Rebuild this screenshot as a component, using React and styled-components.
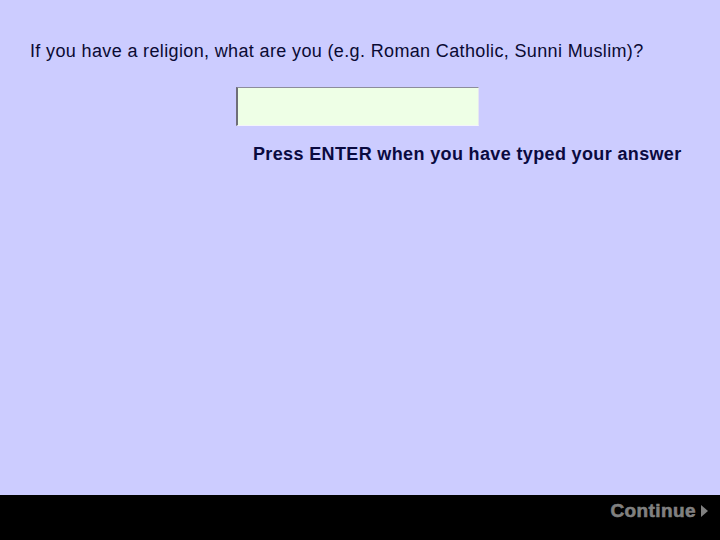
import styled, { createGlobalStyle } from "styled-components";

const GlobalStyle = createGlobalStyle`
  html, body {
    margin: 0;
    padding: 0;
    background: #ccccff;
  }
  body {
    font-family: "Liberation Sans", Arial, sans-serif;
  }
`;

const Page = styled.div`
  width: 720px;
  height: 540px;
  display: flex;
  flex-direction: column;
  background: #ccccff;
  overflow: hidden;
`;

const Main = styled.div`
  flex: 1;
  display: flex;
  flex-direction: column;
  padding: 41px 0 0 30px;
`;

const Question = styled.div`
  font-size: 18px;
  line-height: 20px;
  letter-spacing: 0.36px;
  color: #0a0a33;
`;

const Answer = styled.input`
  box-sizing: border-box;
  width: 243px;
  height: 39px;
  margin: 26px 0 0 206px;
  padding: 0 4px;
  background: #eeffe6;
  border-style: solid;
  border-width: 1px 1px 1px 2px;
  border-color: #8c8c9c #e6e6f0 #f4f4fa #6e6e78;
  font-family: "Liberation Sans", Arial, sans-serif;
  font-size: 16px;
  outline: none;
`;

const Hint = styled.div`
  margin: 17px 0 0 223px;
  font-size: 18px;
  line-height: 22px;
  font-weight: 700;
  letter-spacing: 0.36px;
  color: #0a0a40;
`;

const Footer = styled.div`
  height: 45px;
  box-sizing: border-box;
  background: #000;
  display: flex;
  align-items: flex-start;
  justify-content: flex-end;
  padding: 5px 12px 0 0;
`;

const ContinueButton = styled.div`
  display: flex;
  align-items: center;
  gap: 5px;
  color: #808080;
  font-size: 19px;
  line-height: 22px;
  font-weight: 700;
  letter-spacing: 0.4px;
  -webkit-text-stroke: 0.6px #808080;
  cursor: pointer;
`;

const Arrow = styled.span`
  width: 0;
  height: 0;
  border-top: 6px solid transparent;
  border-bottom: 6px solid transparent;
  border-left: 7px solid #808080;
`;

export default function App() {
  return (
    <Page>
      <GlobalStyle />
      <Main>
        <Question>
          If you have a religion, what are you (e.g. Roman Catholic, Sunni Muslim)?
        </Question>
        <div>
          <Answer type="text" />
        </div>
        <Hint>Press ENTER when you have typed your answer</Hint>
      </Main>
      <Footer>
        <ContinueButton>
          Continue
          <Arrow />
        </ContinueButton>
      </Footer>
    </Page>
  );
}
